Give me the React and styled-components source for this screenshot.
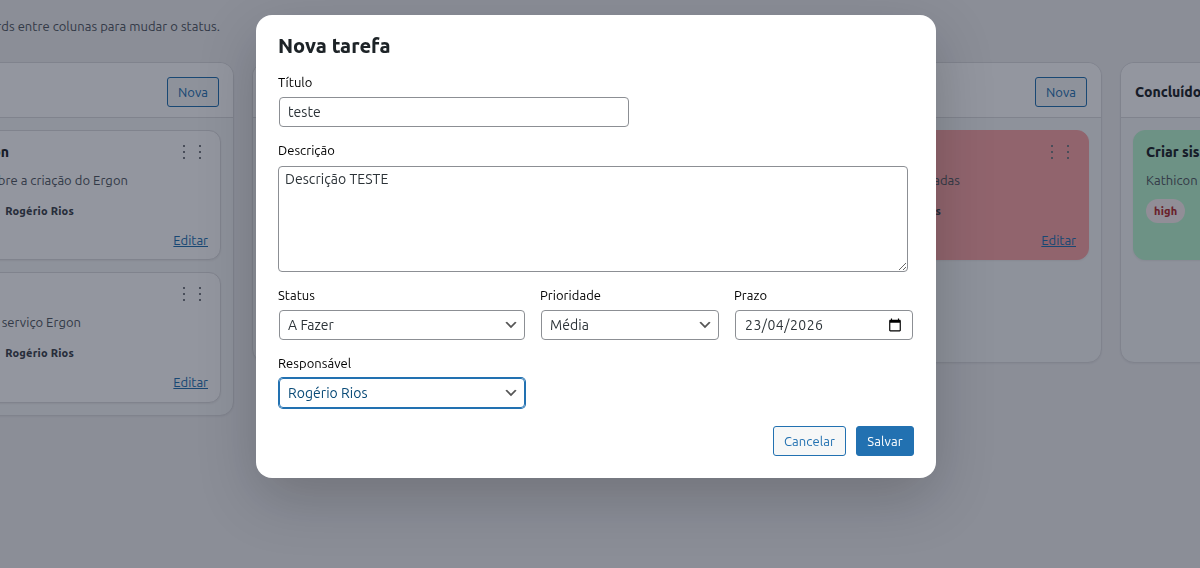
import React from 'react';
import styled, { createGlobalStyle, css } from 'styled-components';

export default function App() {
    return (
        <>
            <GlobalStyle />
            <Page>
                <Intro><Line $end={376}>Arraste os cards entre colunas para mudar o status.</Line></Intro>
                <Board>
                    <Column>
                        <ColumnHeader>
                            <h2>A Fazer</h2>
                            <Button $size={52}>Nova</Button>
                        </ColumnHeader>
                        <ColumnBody>
                            <Card title="Ergon" titleEnd={165} text="Sobre a criação do Ergon" textEnd={284} owner="Rogério Rios" />
                            <Card text="Criar serviço Ergon" textEnd={237} owner="Rogério Rios" />
                        </ColumnBody>
                    </Column>
                    <Column>
                        <ColumnHeader />
                        <ColumnBody />
                    </Column>
                    <Column>
                        <ColumnHeader>
                            <h2></h2>
                            <Button $size={52}>Nova</Button>
                        </ColumnHeader>
                        <ColumnBody>
                            <Card color="#fca5a5" text="atrasadas" textEnd={248} owner="Rogério Rios" ownerEnd={229} />
                        </ColumnBody>
                    </Column>
                    <Column>
                        <ColumnHeader>
                            <h2>Concluído</h2>
                        </ColumnHeader>
                        <ColumnBody>
                            <Card color="#bbf7d0" title="Criar sistema" text="Kathicon" priority="high" />
                        </ColumnBody>
                    </Column>
                </Board>
            </Page>
            <Overlay>
                <Modal>
                    <h1>Nova tarefa</h1>
                    <Field $gap={12}>
                        <Label>Título</Label>
                        <Control $w={350}><input defaultValue="teste" /></Control>
                    </Field>
                    <Field>
                        <Label $h={26}>Descrição</Label>
                        <Textarea defaultValue="Descrição TESTE" />
                    </Field>
                    <Row>
                        <Field $gap={12}>
                            <Label>Status</Label>
                            <Select value="A Fazer" w={246} />
                        </Field>
                        <Field $gap={12}>
                            <Label>Prioridade</Label>
                            <Select value="Média" w={178} />
                        </Field>
                        <Field $gap={12}>
                            <Label>Prazo</Label>
                            <Control $w={178} $date>
                                <input defaultValue="23/04/2026" />
                                <CalendarIcon />
                            </Control>
                        </Field>
                    </Row>
                    <Field>
                        <Label>Responsável</Label>
                        <Select value="Rogério Rios" w={246} focused />
                    </Field>
                    <Actions>
                        <Button $size={73}>Cancelar</Button>
                        <Button $size={58} $primary>Salvar</Button>
                    </Actions>
                </Modal>
            </Overlay>
        </>
    )
}

function Card({ color, title, titleEnd, text, textEnd, owner, ownerEnd = 230, priority }) {
    return (
        <CardBox $color={color}>
            <CardTop>
                <Line as="h3" $end={titleEnd}>{title}</Line>
                <Handle />
            </CardTop>
            <CardText $end={textEnd}>{text}</CardText>
            <Meta>
                {priority && <Badge>{priority}</Badge>}
                {owner && <Line as="strong" $end={ownerEnd}>{owner}</Line>}
            </Meta>
            <Edit>Editar</Edit>
        </CardBox>
    )
}

function Select({ value, w, focused }) {
    return (
        <Control $w={w} $focused={focused}>
            <select defaultValue={value}>
                <option>{value}</option>
            </select>
            <svg width="16" height="16" viewBox="0 0 20 20">
                <path d="M5 6l5 5 5-5 2 1-7 7-7-7 2-1z" fill="#555" />
            </svg>
        </Control>
    )
}

function Handle() {
    return (
        <svg width="32" height="20" viewBox="0 0 32 20" fill="#787c82">
            {[7, 23].map(x => [4, 10, 16].map(y => (
                <rect key={x + '-' + y} x={x} y={y - 1} width="2" height="2" />
            )))}
        </svg>
    )
}

function CalendarIcon() {
    return (
        <svg width="14" height="14" viewBox="0 0 24 24">
            <path d="M20 3h-1V1h-2v2H7V1H5v2H4c-1.1 0-2 .9-2 2v16c0 1.1.9 2 2 2h16c1.1 0 2-.9 2-2V5c0-1.1-.9-2-2-2zm0 18H4V8h16v13z" fill="#000" />
        </svg>
    )
}


/* --- STYLES --- */
const GlobalStyle = createGlobalStyle`
    *{
        box-sizing: border-box;
    }
    body{
        margin: 0;
        overflow: hidden;
        background: #f0f0f1;
        font-family: Ubuntu, "Noto Sans", sans-serif;
        font-size: 13px;
        font-weight: 420;
        color: #3c434a;
    }
    h1, h2, h3{
        margin: 0;
        color: #1d2327;
    }
`;
const Page = styled.div`
    width: 1200px;
    height: 568px;
    overflow: hidden;
`;
const Line = styled.div`
    width: ${p => p.$end ? p.$end + 'px' : 'auto'};
    text-align: ${p => p.$end ? 'right' : 'left'};
    white-space: nowrap;
`;
const Intro = styled.div`
    height: 62px;
    padding-top: 16px;
    margin-left: -156px;
    line-height: 20px;
    letter-spacing: 0.04px;
    color: #50575e;
`;
const Board = styled.div`
    display: flex;
    align-items: flex-start;
    gap: 18px;
    margin-left: -182px;
`;
const Column = styled.div`
    flex: 0 0 416px;
    min-height: 301px;
    background: #f6f7f7;
    border: 1px solid #dcdcde;
    border-radius: 14px;
    box-shadow: 0 1px 2px rgba(0, 0, 0, .05);
    overflow: hidden;
`;
const ColumnHeader = styled.div`
    display: flex;
    align-items: center;
    justify-content: space-between;
    height: 55px;
    padding: 14px 14px 10px;
    background: #fff;
    border-bottom: 1px solid #dcdcde;
    h2{
        font-size: 14px;
        font-weight: 800;
    }
`;
const ColumnBody = styled.div`
    display: flex;
    flex-direction: column;
    gap: 12px;
    padding: 12px;
`;
const CardBox = styled.div`
    height: 130.4px;
    padding: 11px 12px;
    background: ${p => p.$color || '#fff'};
    border: 1px solid ${p => p.$color || '#dcdcde'};
    border-radius: 12px;
    box-shadow: 0 1px 2px rgba(0, 0, 0, .06);
`;
const CardTop = styled.div`
    display: flex;
    justify-content: space-between;
    height: 20px;
    h3{
        font-size: 14px;
        font-weight: 800;
        line-height: 20px;
    }
`;
const CardText = styled(Line)`
    margin-top: 8px;
    line-height: 20px;
    letter-spacing: 0.04px;
    color: #50575e;
`;
const Meta = styled.div`
    display: flex;
    align-items: center;
    height: 24px;
    margin-top: 9px;
    font-size: 11px;
    letter-spacing: 0.2px;
    strong{
        font-weight: 800;
    }
`;
const Badge = styled.span`
    padding: 0 8px;
    border-radius: 12px;
    background: #fcf0f1;
    color: #b32d2e;
    font-weight: 800;
    line-height: 24px;
`;
const Edit = styled.div`
    margin-top: 7px;
    line-height: 20px;
    text-align: right;
    text-decoration: underline;
    color: #2271b1;
`;
const Button = styled.button`
    width: ${p => p.$size}px;
    height: 30px;
    padding: 0;
    border: 1px solid #2271b1;
    border-radius: 3px;
    background: ${p => p.$primary ? '#2271b1' : '#f6f7f7'};
    color: ${p => p.$primary ? '#fff' : '#2271b1'};
    font-family: inherit;
    font-size: 13px;
    font-weight: inherit;
    letter-spacing: 0.08px;
`;
const Overlay = styled.div`
    position: fixed;
    inset: 0;
    padding-top: 15px;
    background: rgba(15, 23, 42, .45);
`;
const Modal = styled.div`
    width: 680px;
    height: 463px;
    margin-left: 256px;
    padding: 18px 22px 22px;
    background: #fff;
    border-radius: 16px;
    box-shadow: 0 20px 60px rgba(0, 0, 0, .2);
    h1{
        margin-bottom: 13px;
        font-size: 20px;
        font-weight: 800;
        line-height: 26px;
    }
`;
const Field = styled.div`
    display: flex;
    flex-direction: column;
    margin-bottom: ${p => p.$gap || 13}px;
`;
const Label = styled.label`
    height: ${p => p.$h || 24}px;
    line-height: 20px;
    color: #000;
    letter-spacing: 0.04px;
`;
const Control = styled.div`
    display: flex;
    align-items: center;
    width: ${p => p.$w}px;
    height: 30px;
    margin: 1px;
    padding-right: ${p => p.$date ? 10 : 5}px;
    border: 1px solid #8c8f94;
    border-radius: 4px;
    color: #2c3338;
    input, select{
        flex: 1;
        min-width: 0;
        padding: 0 0 0 ${p => p.$date ? 9 : 8}px;
        border: none;
        outline: none;
        appearance: none;
        background: transparent;
        color: inherit;
        font-family: inherit;
        font-size: 14px;
        font-weight: inherit;
        letter-spacing: ${p => p.$date ? '0.5px' : '0.04px'};
    }
    ${p => p.$focused && css`
        border-color: #2271b1;
        box-shadow: 0 0 0 1px #2271b1;
        color: #0a4b78;
    `}
`;
const Textarea = styled.textarea`
    width: 630px;
    height: 106px;
    padding: 2px 6px;
    border: 1px solid #8c8f94;
    border-radius: 4px;
    color: #2c3338;
    font-family: inherit;
    font-size: 14px;
    font-weight: inherit;
    line-height: 20px;
    letter-spacing: 0.05px;
    outline: none;
`;
const Row = styled.div`
    display: flex;
    gap: 14px;
`;
const Actions = styled.div`
    display: flex;
    justify-content: flex-end;
    gap: 10px;
    padding-top: 4px;
`;
